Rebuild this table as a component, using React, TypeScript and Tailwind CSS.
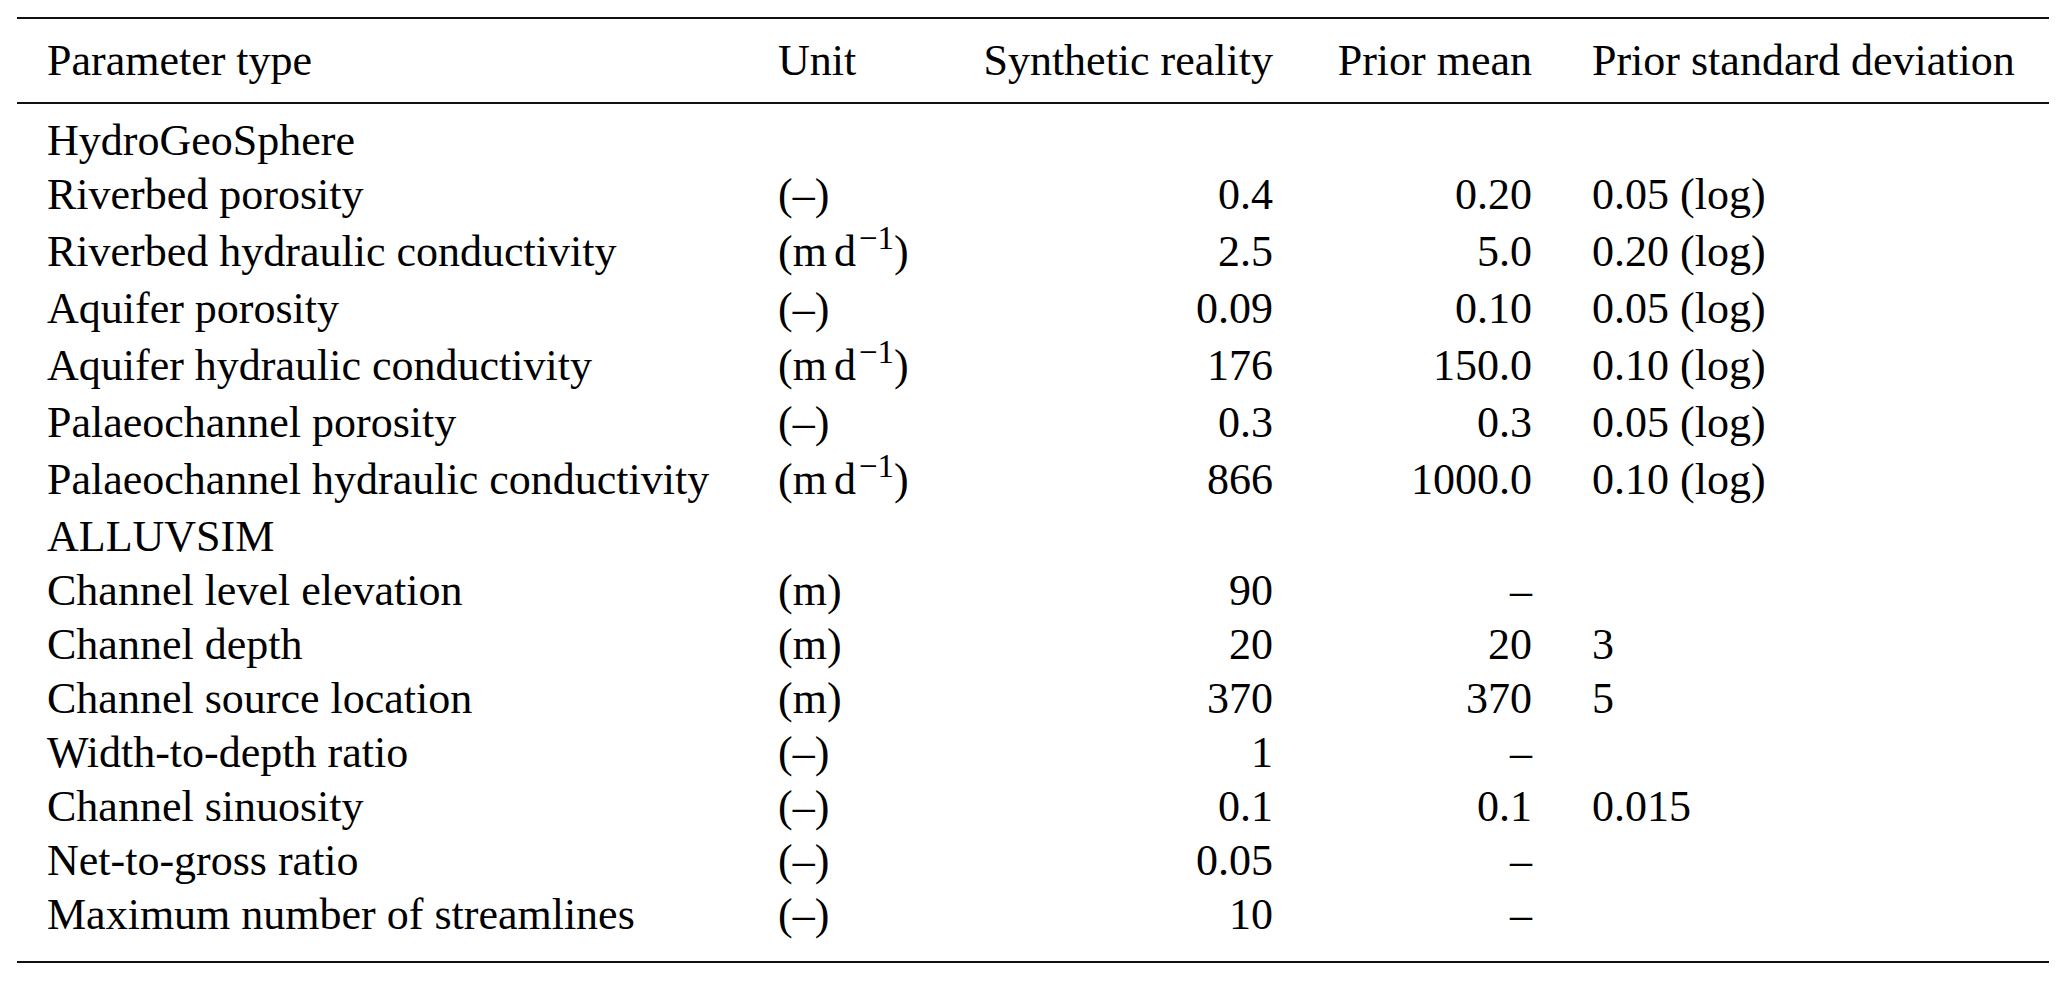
import React from 'react'

type Row = {
  name: string
  unit: 'dash' | 'rate' | 'm' | null
  real?: string
  mean?: string
  sd?: string
  section?: boolean
}

const rows: Row[] = [
  { name: 'HydroGeoSphere', unit: null, section: true },
  { name: 'Riverbed porosity', unit: 'dash', real: '0.4', mean: '0.20', sd: '0.05 (log)' },
  { name: 'Riverbed hydraulic conductivity', unit: 'rate', real: '2.5', mean: '5.0', sd: '0.20 (log)' },
  { name: 'Aquifer porosity', unit: 'dash', real: '0.09', mean: '0.10', sd: '0.05 (log)' },
  { name: 'Aquifer hydraulic conductivity', unit: 'rate', real: '176', mean: '150.0', sd: '0.10 (log)' },
  { name: 'Palaeochannel porosity', unit: 'dash', real: '0.3', mean: '0.3', sd: '0.05 (log)' },
  { name: 'Palaeochannel hydraulic conductivity', unit: 'rate', real: '866', mean: '1000.0', sd: '0.10 (log)' },
  { name: 'ALLUVSIM', unit: null, section: true },
  { name: 'Channel level elevation', unit: 'm', real: '90', mean: '–' },
  { name: 'Channel depth', unit: 'm', real: '20', mean: '20', sd: '3' },
  { name: 'Channel source location', unit: 'm', real: '370', mean: '370', sd: '5' },
  { name: 'Width-to-depth ratio', unit: 'dash', real: '1', mean: '–' },
  { name: 'Channel sinuosity', unit: 'dash', real: '0.1', mean: '0.1', sd: '0.015' },
  { name: 'Net-to-gross ratio', unit: 'dash', real: '0.05', mean: '–' },
  { name: 'Maximum number of streamlines', unit: 'dash', real: '10', mean: '–' },
]

const Unit = ({ kind }: { kind: Row['unit'] }) => {
  if (kind === 'dash') return <span>(–)</span>
  if (kind === 'm') return <span>(m)</span>
  if (kind === 'rate')
    return (
      <span>
        (m<span className="ml-[7px]">d</span>
        <sup className="text-[33px] -top-[17px] ml-[3px]">−1</sup>)
      </span>
    )
  return null
}

const grid = 'grid grid-cols-[731px_201px_354px_259px_487px]'

export default function App() {
  return (
    <div
      className="min-h-screen bg-white text-black"
      style={{ fontFamily: '"Liberation Serif", "Times New Roman", serif' }}
    >
      <div className="ml-[17px] pt-[17px] w-[2032px] text-[44px] leading-none">
        <div className={`${grid} h-[87px] items-center border-y-2 border-[#111]`}>
          <div className="px-[30px]">Parameter type</div>
          <div className="px-[30px]">Unit</div>
          <div className="px-[30px] text-right">Synthetic reality</div>
          <div className="px-[30px] text-right">Prior mean</div>
          <div className="px-[30px]">Prior standard deviation</div>
        </div>
        <div className="pt-[10px] pb-[19px] border-b-2 border-[#111]">
          {rows.map((r) => (
            <div
              key={r.name}
              className={`${grid} items-center ${r.unit === 'rate' ? 'h-[60px]' : 'h-[54px]'}`}
            >
              <div className="px-[30px] whitespace-nowrap">{r.name}</div>
              <div className="px-[30px] whitespace-nowrap">
                <Unit kind={r.unit} />
              </div>
              <div className="px-[30px] text-right">{r.real}</div>
              <div className="px-[30px] text-right">{r.mean}</div>
              <div className="px-[30px]">{r.sd}</div>
            </div>
          ))}
        </div>
      </div>
    </div>
  )
}
